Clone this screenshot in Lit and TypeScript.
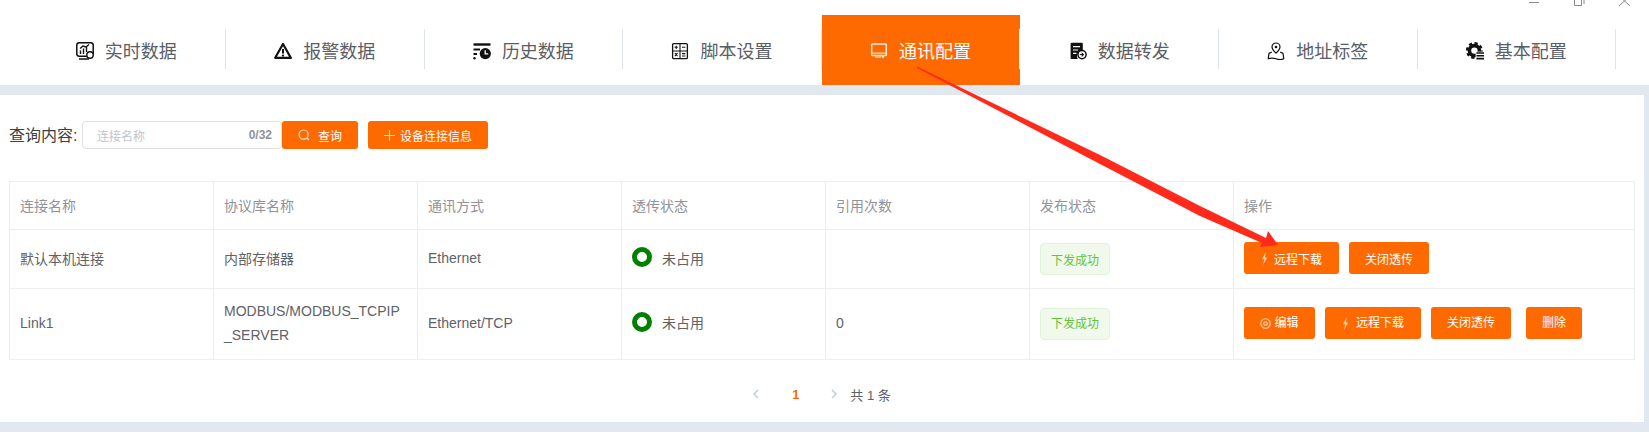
import { LitElement, css, html, svg } from 'lit';
import { customElement } from 'lit/decorators.js';

const tabIcons = {
  realtime: svg`<rect x="0.8" y="0.8" width="16.4" height="13.4" rx="2.4" fill="none" stroke="currentColor" stroke-width="1.5"/>
    <path d="M3 17h10" stroke="currentColor" stroke-width="1.5"/>
    <path d="M4.5 12V8.5M7.5 12V6.5M10.5 10V5M4 6.5l3-2.5 3 1 3-2.5" fill="none" stroke="currentColor" stroke-width="1.4"/>
    <circle cx="14" cy="13" r="3.2" fill="#fff" stroke="currentColor" stroke-width="1.4"/>`,
  alarm: svg`<path d="M9 2 16.8 15.8H1.2Z" fill="none" stroke="currentColor" stroke-width="2.2" stroke-linejoin="round"/>
    <path d="M9 7v4.5" stroke="currentColor" stroke-width="2"/><circle cx="9" cy="13.6" r="1.1" fill="currentColor"/>`,
  history: svg`<path d="M0.5 2.5h17" stroke="currentColor" stroke-width="2.4"/>
    <path d="M0.5 7.5h6.5" stroke="currentColor" stroke-width="2"/><path d="M0.5 12h3.5" stroke="currentColor" stroke-width="2"/>
    <circle cx="1.5" cy="16.2" r="1.2" fill="currentColor"/>
    <circle cx="12.3" cy="11.6" r="5.6" fill="currentColor"/>
    <path d="M12.2 8.2v3.6h3" fill="none" stroke="#fff" stroke-width="1.3"/>`,
  script: svg`<rect x="1.6" y="1.6" width="14.8" height="15" rx="1.2" fill="none" stroke="currentColor" stroke-width="1.3"/>
    <path d="M1.6 9h14.8M9 1.6v15" stroke="currentColor" stroke-width="1.1"/>
    <path d="M3.6 5.3h3.2M5.2 3.7v3.2M11 5.3h3.4M3.9 11.2l2.6 3M6.5 11.2l-2.6 3M11 11.6h3.4M11 14h3.4" stroke="currentColor" stroke-width="1.1"/>`,
  comm: svg`<rect x="1.7" y="2" width="14.6" height="11.6" rx="0.8" fill="none" stroke="currentColor" stroke-width="1.5" opacity="0.85"/>
    <path d="M2 11.2h14" stroke="currentColor" stroke-width="1.6" opacity="0.55"/>
    <path d="M5 15h6" stroke="currentColor" stroke-width="1.3" opacity="0.7"/>
    <path d="M11.4 14h3l-1.5 2.6Z" fill="currentColor"/>`,
  forward: svg`<path d="M2.6 0.8h10.2a1 1 0 0 1 1 1V8.2a6 6 0 0 0-5 8.9H2.6a1 1 0 0 1-1-1V1.8a1 1 0 0 1 1-1Z" fill="currentColor"/>
    <path d="M4 4.6h7M4 8h5M4 11.4h3.4" stroke="#fff" stroke-width="1.2"/>
    <circle cx="13" cy="12.6" r="4.1" fill="#fff" stroke="currentColor" stroke-width="1.5"/>
    <path d="M10.8 12.6h3.2M12.8 10.8l2 1.8-2 1.8" fill="currentColor" stroke="currentColor" stroke-width="1"/>`,
  address: svg`<path d="M9 11.2C6.4 8.6 5 6.8 5 5a4 4 0 0 1 8 0c0 1.8-1.4 3.6-4 6.2Z" fill="none" stroke="currentColor" stroke-width="1.2"/>
    <circle cx="9" cy="5" r="1.3" fill="currentColor"/>
    <path d="M4.8 10 2 11.4 1.2 16.8c2.4-1 5-1 7.8 0 2.8 1 5.4 1 7.8 0L16 11.4 13.2 10" fill="none" stroke="currentColor" stroke-width="1.2" stroke-linejoin="round"/>`,
  basic: svg`<circle cx="8.4" cy="8.6" r="5" fill="none" stroke="currentColor" stroke-width="3.6"/>
    <circle cx="8.4" cy="8.6" r="7.4" fill="none" stroke="currentColor" stroke-width="2.2" stroke-dasharray="3.2 2.6"/>
    <rect x="9.6" y="9.6" width="8.4" height="8.4" fill="#fff"/>
    <path d="M10.4 11h7.6M10.4 13.8h7.6M10.4 16.6h7.6" stroke="currentColor" stroke-width="1.6"/>`
};

const tabs = [
  { label: '实时数据', icon: tabIcons.realtime },
  { label: '报警数据', icon: tabIcons.alarm },
  { label: '历史数据', icon: tabIcons.history },
  { label: '脚本设置', icon: tabIcons.script },
  { label: '通讯配置', icon: tabIcons.comm, active: true },
  { label: '数据转发', icon: tabIcons.forward },
  { label: '地址标签', icon: tabIcons.address },
  { label: '基本配置', icon: tabIcons.basic }
];

const bolt = html`<svg width="7" height="13" viewBox="0 0 7 13">
  <path d="M4.8 0 1 7.2h2.2L2 13l4.2-7.6H4Z" fill="#ffc9a3"/>
</svg>`;

const editIcon = html`<svg width="11" height="11" viewBox="0 0 11 11" fill="none" stroke="#ffd9bf" stroke-width="1.1">
  <circle cx="5.5" cy="5.5" r="4.7"/><circle cx="5.5" cy="5.5" r="1.8"/><path d="M7.3 5.5v1.6"/>
</svg>`;

const status = html`<span class="status"><span class="ring"></span>未占用</span>`;
const published = html`<span class="badge">下发成功</span>`;

@customElement('app-root')
export class AppRoot extends LitElement {
  static styles = css`
    :host {
      display: block;
      position: relative;
      height: 432px;
      overflow: hidden;
      background: #e2e8ef;
      font-family: 'Liberation Sans', 'Noto Sans CJK SC', sans-serif;
      color: #606266;
    }

    .top {
      height: 85px;
      background: #fff;
    }

    .window-bar {
      display: flex;
      justify-content: flex-end;
      height: 15px;
      padding-right: 14px;
      overflow: hidden;
    }

    .tabs {
      display: flex;
      padding-left: 27.4px;
    }

    .tab {
      width: 198.6px;
      height: 70px;
      padding-top: 14px;
      box-sizing: border-box;
      color: #111;
    }

    .tab-inner {
      display: flex;
      align-items: center;
      justify-content: center;
      gap: 11px;
      height: 40px;
      padding-top: 4px;
      box-sizing: border-box;
      border-right: 1px solid #dfe3ea;
      font-size: 18px;
    }

    .tab-inner span {
      margin-bottom: 3px;
      color: #5a5e66;
    }

    .tab.active {
      background: #ff6a00;
      color: #fff;
    }

    .tab.active .tab-inner {
      border-right-color: #fff;
    }

    .tab.active .tab-inner span {
      color: #fff;
    }

    .main {
      height: 327px;
      margin: 10px 5px 0 0;
      padding: 26px 10px 0 9px;
      box-sizing: border-box;
      background: #fff;
    }

    .query {
      display: flex;
      align-items: center;
      height: 28px;
    }

    .query-label {
      width: 73px;
      margin-bottom: 2px;
      font-size: 16px;
      color: #3c3f44;
    }

    .input {
      display: flex;
      align-items: center;
      justify-content: space-between;
      width: 200px;
      height: 28px;
      padding: 0 9px 0 14px;
      box-sizing: border-box;
      border: 1px solid #dcdfe6;
      border-radius: 4px;
      font-size: 12px;
    }

    .placeholder {
      color: #c0c4cc;
    }

    .count {
      color: #909399;
      font-weight: bold;
    }

    .btn {
      display: inline-flex;
      align-items: center;
      justify-content: center;
      gap: 5px;
      height: 32px;
      border-radius: 3px;
      background: #ff6a00;
      color: #fff;
      font-size: 12px;
      box-sizing: border-box;
    }

    .query .btn {
      height: 28px;
    }

    .btn-search {
      width: 76px;
      gap: 8px;
    }

    .btn-add {
      width: 120px;
      margin-left: 10px;
    }

    .w71 { width: 71px; gap: 3px; }
    .w95 { width: 95px; gap: 6px; }
    .w96 { width: 96px; gap: 7px; }
    .w80 { width: 80px; }
    .w56 { width: 56px; margin-left: 5px; }

    table {
      width: 1625px;
      margin-top: 32px;
      border-collapse: collapse;
      table-layout: fixed;
      font-size: 14px;
    }

    th,
    td {
      padding: 0 10px 2px;
      border: 1px solid #ebeef5;
      text-align: left;
      font-weight: normal;
    }

    th {
      height: 48px;
      box-sizing: border-box;
      color: #909399;
    }

    .row-a td {
      height: 59px;
      box-sizing: border-box;
    }

    .row-b td {
      height: 71px;
      box-sizing: border-box;
      line-height: 24px;
    }

    .ops-row {
      display: flex;
      gap: 10px;
    }

    .status {
      display: flex;
      align-items: center;
      gap: 10px;
    }

    .ring {
      width: 20px;
      height: 20px;
      margin-bottom: 2px;
      box-sizing: border-box;
      border: 5px solid #008000;
      border-radius: 50%;
    }

    .badge {
      display: flex;
      align-items: center;
      justify-content: center;
      width: 70px;
      height: 32px;
      margin-top: 2px;
      box-sizing: border-box;
      border: 1px solid #e1f3d8;
      border-radius: 4px;
      background: #f0f9eb;
      color: #67c23a;
      font-size: 12px;
    }

    .pager {
      display: flex;
      align-items: center;
      justify-content: center;
      height: 20px;
      margin: 24px 0 0 -9px;
      width: 1644px;
      font-size: 13px;
    }

    .page-num {
      margin: 0 33px;
      color: #ff6a00;
      font-weight: bold;
      width: 6px;
    }

    .total {
      margin-left: 13px;
    }

    .arrow {
      position: absolute;
      left: 0;
      top: 0;
      pointer-events: none;
    }
  `;

  render() {
    return html`
      <div class="top">
        <div class="window-bar">
          <svg width="110" height="15" viewBox="0 0 110 15" fill="none" stroke="#8a8a8a" stroke-width="1">
            <path d="M4 2.5h10"/>
            <path d="M49.5 -2.5h7v8h-7zM56.5 -1h2.5v5"/>
            <path d="M94 -4l11 10M105 -4l-11 10"/>
          </svg>
        </div>
        <div class="tabs">
          ${tabs.map(
            (tab) => html`
              <div class="tab ${tab.active ? 'active' : ''}">
                <div class="tab-inner">
                  <svg width="18" height="18" viewBox="0 0 18 18">${tab.icon}</svg>
                  <span>${tab.label}</span>
                </div>
              </div>
            `
          )}
        </div>
      </div>
      <div class="main">
        <div class="query">
          <div class="query-label">查询内容:</div>
          <div class="input">
            <span class="placeholder">连接名称</span>
            <span class="count">0/32</span>
          </div>
          <div class="btn btn-search">
            <svg width="12" height="12" viewBox="0 0 12 12" fill="none" stroke="#ffe3cf" stroke-width="1.2">
              <circle cx="5.6" cy="5.6" r="4.6"/><path d="M9 9l2 2"/>
            </svg>
            查询
          </div>
          <div class="btn btn-add">
            <svg width="11" height="11" viewBox="0 0 11 11" stroke="#ffe3cf" stroke-width="1.1">
              <path d="M5.5 0v11M0 5.5h11"/>
            </svg>
            设备连接信息
          </div>
        </div>
        <table>
          <colgroup>
            <col style="width:204px" /><col style="width:204px" /><col style="width:204px" />
            <col style="width:204px" /><col style="width:204px" /><col style="width:204px" />
            <col style="width:401px" />
          </colgroup>
          <thead>
            <tr>
              <th>连接名称</th><th>协议库名称</th><th>通讯方式</th><th>透传状态</th>
              <th>引用次数</th><th>发布状态</th><th>操作</th>
            </tr>
          </thead>
          <tbody>
            <tr class="row-a">
              <td>默认本机连接</td>
              <td>内部存储器</td>
              <td>Ethernet</td>
              <td>${status}</td>
              <td></td>
              <td>${published}</td>
              <td>
                <div class="ops-row">
                  <div class="btn w95">${bolt}远程下载</div>
                  <div class="btn w80">关闭透传</div>
                </div>
              </td>
            </tr>
            <tr class="row-b">
              <td>Link1</td>
              <td>MODBUS/MODBUS_TCPIP<br />_SERVER</td>
              <td>Ethernet/TCP</td>
              <td>${status}</td>
              <td>0</td>
              <td>${published}</td>
              <td>
                <div class="ops-row">
                  <div class="btn w71">${editIcon}编辑</div>
                  <div class="btn w96">${bolt}远程下载</div>
                  <div class="btn w80">关闭透传</div>
                  <div class="btn w56">删除</div>
                </div>
              </td>
            </tr>
          </tbody>
        </table>
        <div class="pager">
          <svg width="6" height="10" viewBox="0 0 6 10" fill="none" stroke="#c0ccda" stroke-width="1.5"><path d="M5 1 1 5l4 4"/></svg>
          <span class="page-num">1</span>
          <svg width="6" height="10" viewBox="0 0 6 10" fill="none" stroke="#c0ccda" stroke-width="1.5"><path d="M1 1l4 4-4 4"/></svg>
          <span class="total">共 1 条</span>
        </div>
      </div>
      <svg class="arrow" width="1649" height="432" viewBox="0 0 1649 432">
        <path d="M917 66.5 1100 155 1200 206 1266 238 1268 231 1278 245 1260 247 1262 243 1200 216 1100 164 917 68Z" fill="#ff2a1c"/>
      </svg>
    `;
  }
}
